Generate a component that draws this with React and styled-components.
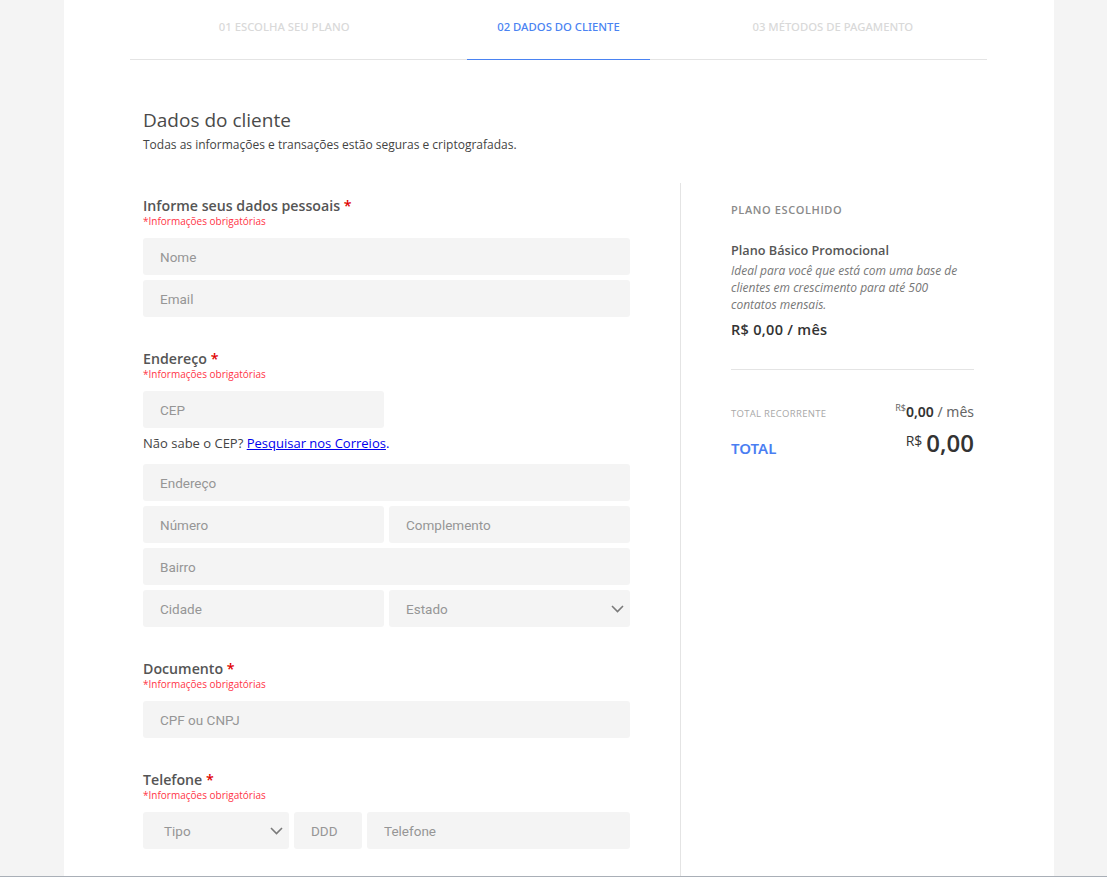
import React from "react";
import styled, { createGlobalStyle } from "styled-components";

const HEAD = `"Noto Sans", "Open Sans", sans-serif`;
const BODY = `"Open Sans", "Noto Sans", sans-serif`;
const FIELD = `Roboto, "Liberation Sans", sans-serif`;

const GlobalStyle = createGlobalStyle`
  * { box-sizing: border-box; }
  html, body { margin: 0; padding: 0; }
  body {
    background: #f4f4f4;
    font-family: ${BODY};
    color: #444;
  }
`;

function Chevron() {
  return (
    <svg width="13" height="8" viewBox="0 0 13 8" fill="none">
      <path d="M1 1l5.5 5.5L12 1" stroke="#7a7a7a" strokeWidth="1.6" />
    </svg>
  );
}

function Field({ placeholder }) {
  return <Input placeholder={placeholder} readOnly />;
}

function Select({ label, left }) {
  return (
    <SelectBox left={left}>
      <span>{label}</span>
      <Chevron />
    </SelectBox>
  );
}

function SectionHead({ children, first }) {
  return (
    <SectionTitle first={first}>
      <Heading>
        {children} <Star>*</Star>
      </Heading>
      <Required>*Informações obrigatórias</Required>
    </SectionTitle>
  );
}

export default function App() {
  return (
    <Shell>
      <GlobalStyle />
      <Page>
        <Steps>
          <Step>
            <StepLabel>01 ESCOLHA SEU PLANO</StepLabel>
          </Step>
          <Step>
            <StepLabel active>02 DADOS DO CLIENTE</StepLabel>
          </Step>
          <Step>
            <StepLabel>03 MÉTODOS DE PAGAMENTO</StepLabel>
          </Step>
        </Steps>

        <Content>
          <Title>Dados do cliente</Title>
          <Subtitle>
            Todas as informações e transações estão seguras e criptografadas.
          </Subtitle>

          <Columns>
            <FormColumn>
              <SectionHead first>Informe seus dados pessoais</SectionHead>
              <Fields>
                <Field placeholder="Nome" />
                <Field placeholder="Email" />
              </Fields>

              <SectionHead>Endereço</SectionHead>
              <Fields>
                <Row cols="241px">
                  <Field placeholder="CEP" />
                </Row>
              </Fields>
              <Help>
                Não sabe o CEP? <HelpLink href="#">Pesquisar nos Correios</HelpLink>
                <Dot>.</Dot>
              </Help>
              <Fields>
                <Field placeholder="Endereço" />
                <Row cols="1fr 1fr">
                  <Field placeholder="Número" />
                  <Field placeholder="Complemento" />
                </Row>
                <Field placeholder="Bairro" />
                <Row cols="1fr 1fr">
                  <Field placeholder="Cidade" />
                  <Select label="Estado" />
                </Row>
              </Fields>

              <SectionHead>Documento</SectionHead>
              <Fields>
                <Field placeholder="CPF ou CNPJ" />
              </Fields>

              <SectionHead>Telefone</SectionHead>
              <Fields>
                <Row cols="146px 68px 1fr">
                  <Select label="Tipo" left={21} />
                  <Field placeholder="DDD" />
                  <Field placeholder="Telefone" />
                </Row>
              </Fields>
            </FormColumn>

            <Summary>
              <SummaryLabel>PLANO ESCOLHIDO</SummaryLabel>
              <PlanName>Plano Básico Promocional</PlanName>
              <PlanText>
                Ideal para você que está com uma base de clientes em
                crescimento para até 500 contatos mensais.
              </PlanText>
              <PlanPrice>R$ 0,00 / mês</PlanPrice>
              <Divider />
              <TotalRow>
                <TotalSmall>TOTAL RECORRENTE</TotalSmall>
                <Amount>
                  <Currency>R$</Currency>
                  <strong>0,00</strong> <Period>/ mês</Period>
                </Amount>
              </TotalRow>
              <TotalRow big>
                <TotalLabel>TOTAL</TotalLabel>
                <BigAmount>
                  <BigCurrency>R$</BigCurrency>
                  <span>0,00</span>
                </BigAmount>
              </TotalRow>
            </Summary>
          </Columns>
        </Content>
      </Page>
    </Shell>
  );
}

const Shell = styled.div`
  height: 100vh;
  overflow: hidden;
  border-bottom: 1px solid #a9afb7;
`;

const Page = styled.div`
  width: 990px;
  margin-left: 64px;
  background: #fff;
  min-height: 100%;
`;

const Steps = styled.div`
  display: grid;
  grid-template-columns: repeat(3, 1fr);
  margin: 0 67px 0 66px;
  padding: 0 17px;
  height: 60px;
  border-bottom: 1px solid #e4e4e4;
`;

const Step = styled.div`
  display: flex;
  justify-content: center;
`;

const StepLabel = styled.div`
  height: 60px;
  padding: 20px 30px 0;
  font-family: ${HEAD};
  font-size: 11.3px;
  font-weight: 500;
  line-height: 14px;
  color: ${(p) => (p.active ? "#4a83f2" : "#d9d9d9")};
  border-bottom: 1px solid ${(p) => (p.active ? "#4a83f2" : "transparent")};
`;

const Content = styled.div`
  padding: 0 80px 0 79px;
`;

const Title = styled.h1`
  margin: 48px 0 0;
  font-family: ${BODY};
  font-size: 19px;
  font-weight: 400;
  line-height: 24px;
  color: #4a4a4a;
`;

const Subtitle = styled.p`
  margin: 4px 0 0;
  font-size: 12px;
  line-height: 18px;
  color: #444;
`;

const Columns = styled.div`
  display: flex;
  margin-top: 29px;
`;

const FormColumn = styled.div`
  width: 538px;
  padding: 0 50px 120px 0;
  border-right: 1px solid #e4e4e4;
`;

const SectionTitle = styled.div`
  margin-top: ${(p) => (p.first ? "14px" : "33px")};
  margin-bottom: 11px;
`;

const Heading = styled.h3`
  margin: 0;
  font-family: ${BODY};
  font-size: 14.2px;
  font-weight: 600;
  line-height: 18px;
  color: #555;
`;

const Star = styled.span`
  color: #e00000;
`;

const Required = styled.div`
  font-family: ${BODY};
  font-size: 10px;
  line-height: 12px;
  color: #ff3347;
`;

const Fields = styled.div`
  display: flex;
  flex-direction: column;
  gap: 5px;
`;

const Row = styled.div`
  display: grid;
  grid-template-columns: ${(p) => p.cols};
  gap: 5px;
`;

const Input = styled.input`
  display: block;
  width: 100%;
  height: 37px;
  padding: 0 17px;
  border: none;
  border-radius: 3px;
  background: #f4f4f4;
  font-family: ${FIELD};
  font-size: 13.5px;
  color: #555;
  outline: none;

  &::placeholder {
    color: #969696;
  }
`;

const SelectBox = styled.div`
  display: flex;
  align-items: center;
  justify-content: space-between;
  height: 37px;
  padding: 0 6px 0 ${(p) => p.left || 17}px;
  border-radius: 3px;
  background: #f4f4f4;
  font-family: ${FIELD};
  font-size: 13.5px;
  color: #969696;
`;

const Help = styled.p`
  margin: 6px 0 12px;
  font-size: 13px;
  line-height: 18px;
  color: #444;
`;

const HelpLink = styled.a`
  color: #0000ee;
  text-decoration: underline;
`;

const Dot = styled.span`
  color: #0000ee;
`;

const Summary = styled.div`
  width: 293px;
  padding: 19px 0 0 50px;
`;

const SummaryLabel = styled.div`
  font-family: ${BODY};
  font-size: 11px;
  font-weight: 600;
  line-height: 16px;
  letter-spacing: 0.6px;
  color: #8a8a8a;
`;

const PlanName = styled.div`
  margin-top: 22px;
  font-size: 12.7px;
  font-weight: 600;
  line-height: 20px;
  color: #555;
`;

const PlanText = styled.p`
  margin: 2px 0 0;
  font-size: 12px;
  font-style: italic;
  line-height: 17px;
  color: #777;
`;

const PlanPrice = styled.div`
  margin-top: 7px;
  font-family: ${BODY};
  font-size: 14.5px;
  font-weight: 600;
  line-height: 20px;
  letter-spacing: 0.3px;
  color: #333;
`;

const Divider = styled.hr`
  margin: 29px 0 0;
  border: none;
  border-top: 1px solid #e4e4e4;
`;

const TotalRow = styled.div`
  display: flex;
  justify-content: space-between;
  align-items: ${(p) => (p.big ? "flex-end" : "baseline")};
  margin-top: ${(p) => (p.big ? "5px" : "31px")};
`;

const TotalSmall = styled.span`
  font-family: ${BODY};
  font-size: 9.5px;
  letter-spacing: 0.3px;
  color: #a8a8a8;
`;

const Amount = styled.span`
  font-family: ${HEAD};
  font-size: 14px;
  color: #555;

  strong {
    font-weight: 600;
    color: #333;
  }
`;

const Currency = styled.sup`
  font-size: 9px;
  color: #666;
  vertical-align: 6px;
`;

const Period = styled.span`
  color: #666;
`;

const TotalLabel = styled.span`
  font-family: ${HEAD};
  font-size: 15px;
  font-weight: 600;
  line-height: 20px;
  color: #4a7ef2;
`;

const BigAmount = styled.span`
  font-family: ${BODY};
  font-size: 24px;
  font-weight: 600;
  line-height: 30px;
  color: #333;
`;

const BigCurrency = styled.sup`
  margin-right: 4px;
  font-size: 14px;
  font-weight: 400;
  vertical-align: 6px;
`;
